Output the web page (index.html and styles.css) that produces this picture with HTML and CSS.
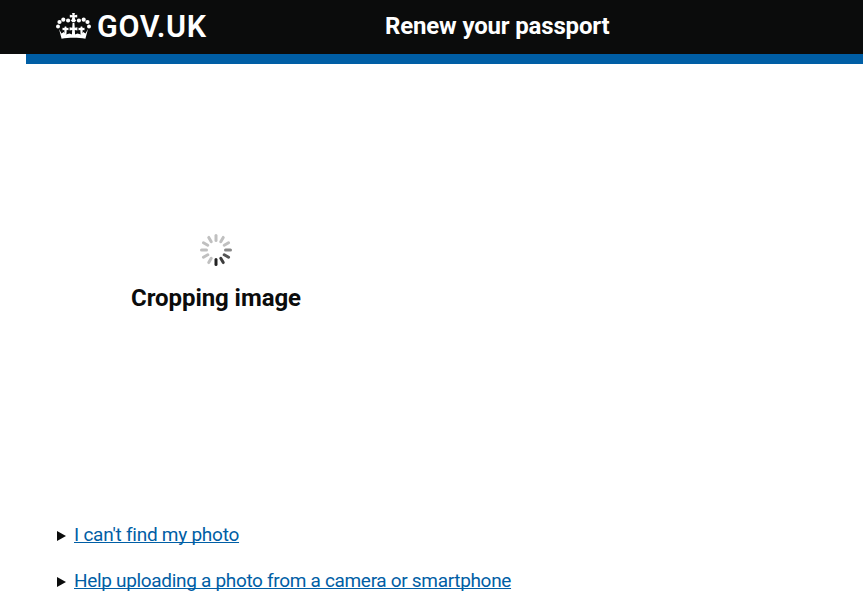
FILE: index.html
```html
<!DOCTYPE html>
<html lang="en">
<head>
<meta charset="utf-8">
<title>Renew your passport</title>
<link rel="stylesheet" href="styles.css">
</head>
<body>
<header class="header">
  <a class="logo">
    <svg class="crown" viewBox="0 0 35 26" fill="#fff">
      <circle cx="2" cy="13.5" r="2"/><circle cx="3.5" cy="9" r="2.1"/><circle cx="7.3" cy="6.7" r="2.1"/><circle cx="12.1" cy="7.5" r="2.1"/>
      <circle cx="22.9" cy="7.5" r="2.1"/><circle cx="27.7" cy="6.7" r="2.1"/><circle cx="31.5" cy="9" r="2.1"/><circle cx="33" cy="13.5" r="2"/>
      <path d="M16.1 0h2.8l-.4 2.2 2.7-.4v2.8l-2.5-.4.4 2.1 1 1.2-1.5 1.8h-2.2l-1.5-1.8 1-1.2.4-2.1-2.5.4V1.8l2.7.4z"/>
      <path d="M3 16l2.5 4.5 2.3-1.5 2.2 2.5 3.5-1 4 1.5 4-1.5 3.5 1 2.2-2.5 2.3 1.5L32 16l-2.6 9.8c-7-1.4-16.800-1.400-23.800 0z"/>
      <path d="M8.800 13.400l-.5 1.700-1.800-.3v2.500l1.800-.4.3 4.600h1.800l.3-4.600 1.800.4v-2.500l-1.800.3-.5-1.700zM24.800 13.400l-.5 1.700-1.800-.3v2.500l1.800-.4.3 4.600h1.800l.3-4.600 1.800.4v-2.500l-1.800.3-.5-1.700zM16.600 10h1.800l.4 4.800 2.600-.6v3.400l-2.600-.6.3 5h-3.200l.3-5-2.600.6v-3.400l2.600.6z"/>
    </svg>
    <span class="wordmark">GOV.UK</span>
  </a>
  <span class="service">Renew your passport</span>
</header>
<div class="bar"></div>
<main class="main">
  <section class="progress">
    <svg class="spinner" viewBox="-16 -16 32 32" stroke-width="3" stroke-linecap="round">
      <g stroke="#c0c0c0">
        <path d="M0-9.5v-5"/><path d="M0-9.5v-5" transform="rotate(30)"/><path d="M0-9.5v-5" transform="rotate(60)"/>
        <path d="M0-9.5v-5" transform="rotate(210)"/><path d="M0-9.5v-5" transform="rotate(240)"/><path d="M0-9.5v-5" transform="rotate(270)"/>
        <path d="M0-9.5v-5" transform="rotate(300)"/><path d="M0-9.5v-5" transform="rotate(330)"/>
      </g>
      <path d="M0-9.5v-5" transform="rotate(90)" stroke="#888"/>
      <path d="M0-9.5v-5" transform="rotate(120)" stroke="#555"/>
      <path d="M0-9.5v-5" transform="rotate(150)" stroke="#3c3c3c"/>
      <path d="M0-9.5v-5" transform="rotate(180)" stroke="#222"/>
    </svg>
    <h1 class="status">Cropping image</h1>
  </section>
  <div class="help">
    <svg class="marker" viewBox="0 0 9 10"><path d="M0 0l9 5-9 5z"/></svg>
    <a class="link find">I can't find my photo</a>
  </div>
  <div class="help">
    <svg class="marker" viewBox="0 0 9 10"><path d="M0 0l9 5-9 5z"/></svg>
    <a class="link upload">Help uploading a photo from a camera or smartphone</a>
  </div>
</main>
</body>
</html>
```
FILE: styles.css
```css
body {
  margin: 0;
  background: #fff;
  color: #0b0c0c;
  font-family: Roboto, "Liberation Sans", sans-serif;
  overflow: hidden;
}
.header {
  display: grid;
  grid-template-columns: 329px 1fr;
  height: 54px;
  padding-left: 56px;
  background: #0b0c0c;
  color: #fff;
  white-space: nowrap;
}
.logo {
  display: flex;
  align-items: flex-start;
  padding-top: 13px;
}
.crown {
  width: 35px;
  height: 26px;
  margin-right: 6px;
}
.wordmark {
  font-size: 30.5px;
  line-height: 28px;
  font-weight: 600;
  letter-spacing: .6px;
}
.service {
  padding-top: 12px;
  font-size: 24px;
  line-height: 28px;
  font-weight: 700;
  letter-spacing: -.16px;
}
.bar {
  height: 10px;
  margin-left: 26px;
  background: #005ea5;
}
.main {
  padding: 170px 0 0 56px;
}
.progress {
  display: flex;
  flex-direction: column;
  align-items: center;
  width: 320px;
  height: 288px;
}
.spinner {
  width: 32px;
  height: 32px;
}
.status {
  margin: 18px 0 0;
  font-size: 24px;
  line-height: 28px;
  letter-spacing: -.06px;
  white-space: nowrap;
}
.help {
  display: flex;
  align-items: center;
  height: 26px;
  margin-bottom: 20px;
}
.marker {
  width: 9px;
  height: 10px;
  margin: 2px 8px 0 1px;
  fill: #0b0c0c;
}
.link {
  color: #005ea5;
  font-size: 19px;
  line-height: 26px;
  text-decoration: underline;
  text-decoration-thickness: 1px;
  text-underline-offset: 1px;
  text-decoration-skip-ink: none;
  white-space: nowrap;
}
.find {
  letter-spacing: -.25px;
}
.upload {
  letter-spacing: -.32px;
}
```
